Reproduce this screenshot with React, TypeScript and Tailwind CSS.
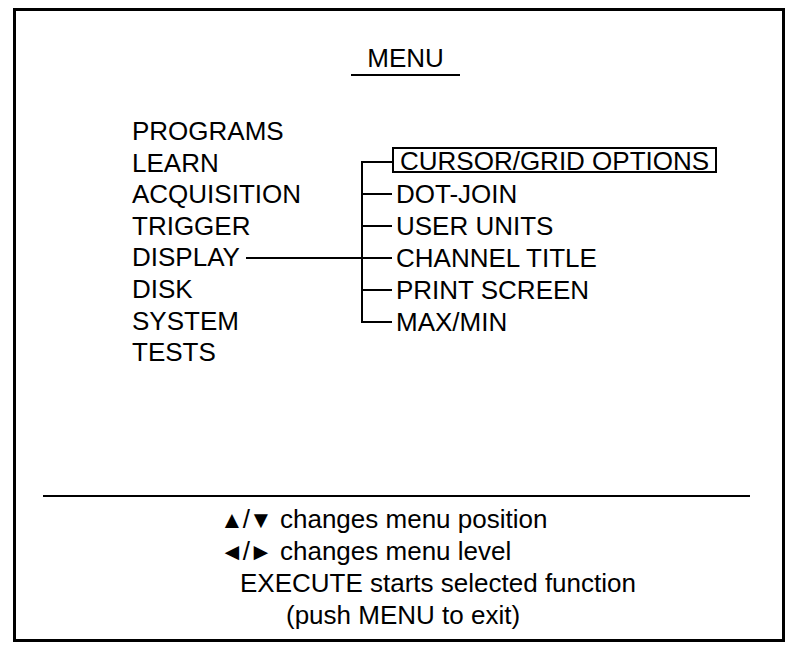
const MAIN_ITEMS = ['PROGRAMS', 'LEARN', 'ACQUISITION', 'TRIGGER', 'DISPLAY', 'DISK', 'SYSTEM', 'TESTS'];
const SUB_ITEMS = ['CURSOR/GRID OPTIONS', 'DOT-JOIN', 'USER UNITS', 'CHANNEL TITLE', 'PRINT SCREEN', 'MAX/MIN'];

// one branch of the tree: half a vertical line above, the tick, half below
const Branch = ({ first, last }: { first: boolean; last: boolean }) => (
  <div className="flex w-[31px] shrink-0 flex-col">
    <div className={first ? 'flex-1' : 'flex-1 border-l-2 border-black'} />
    <div className="h-[2px] bg-black" />
    <div className={last ? 'flex-1' : 'flex-1 border-l-2 border-black'} />
  </div>
);

const Keys = ({ a, b }: { a: string; b: string }) => (
  <>
    <span className="text-[24px] leading-none">{a}</span>
    <span className="mx-[-1px]">/</span>
    <span className="text-[24px] leading-none">{b}</span>
  </>
);

const HelpLines = () => (
  <div className="mt-[6px] flex flex-col text-[26px] leading-[32px]">
    <div className="h-[32px] pl-[204px]">
      <Keys a="▲" b="▼" /> changes menu position
    </div>
    <div className="h-[32px] pl-[204px]">
      <Keys a="◄" b="►" /> changes menu level
    </div>
    <div className="h-[32px] pl-[224px]">EXECUTE starts selected function</div>
    <div className="h-[32px] pl-[270px]">(push MENU to exit)</div>
  </div>
);

export default function App() {
  return (
    <div className="h-[651px] w-[785px] overflow-hidden bg-white font-['Liberation_Sans',Arial,sans-serif] text-black">
      <div className="ml-[13px] mt-[8px] h-[634px] w-[772px] border-[3px] border-black">
        <div className="flex justify-center pl-[13px] pt-[31px]">
          <span className="inline-block border-b-2 border-black px-[16px] text-[26px] leading-[32px]">MENU</span>
        </div>

        <div className="mt-[40px] flex items-start pl-[116px] text-[26px]">
          <div className="flex w-[229px] flex-col leading-[31.6px]">
            {MAIN_ITEMS.map((item) => (
              <div key={item} className="flex items-center">
                <span>{item}</span>
                {item === 'DISPLAY' && <span className="ml-[6px] h-[2px] flex-1 bg-black" />}
              </div>
            ))}
          </div>

          <div className="mt-[30px] flex flex-col leading-[32px]">
            {SUB_ITEMS.map((item, i) => {
              const first = i === 0;
              const last = i === SUB_ITEMS.length - 1;
              return (
                <div key={item} className="flex h-[32px] items-stretch">
                  <Branch first={first} last={last} />
                  {first ? (
                    <span className="mb-[4px] self-center border-2 border-black px-[6px] pt-[2px] leading-[20px]">{item}</span>
                  ) : (
                    <span className="ml-[4px]">{item}</span>
                  )}
                </div>
              );
            })}
          </div>
        </div>

        <div className="ml-[27px] mt-[126px] h-[2px] w-[707px] bg-black" />
        <HelpLines />
      </div>
    </div>
  );
}
